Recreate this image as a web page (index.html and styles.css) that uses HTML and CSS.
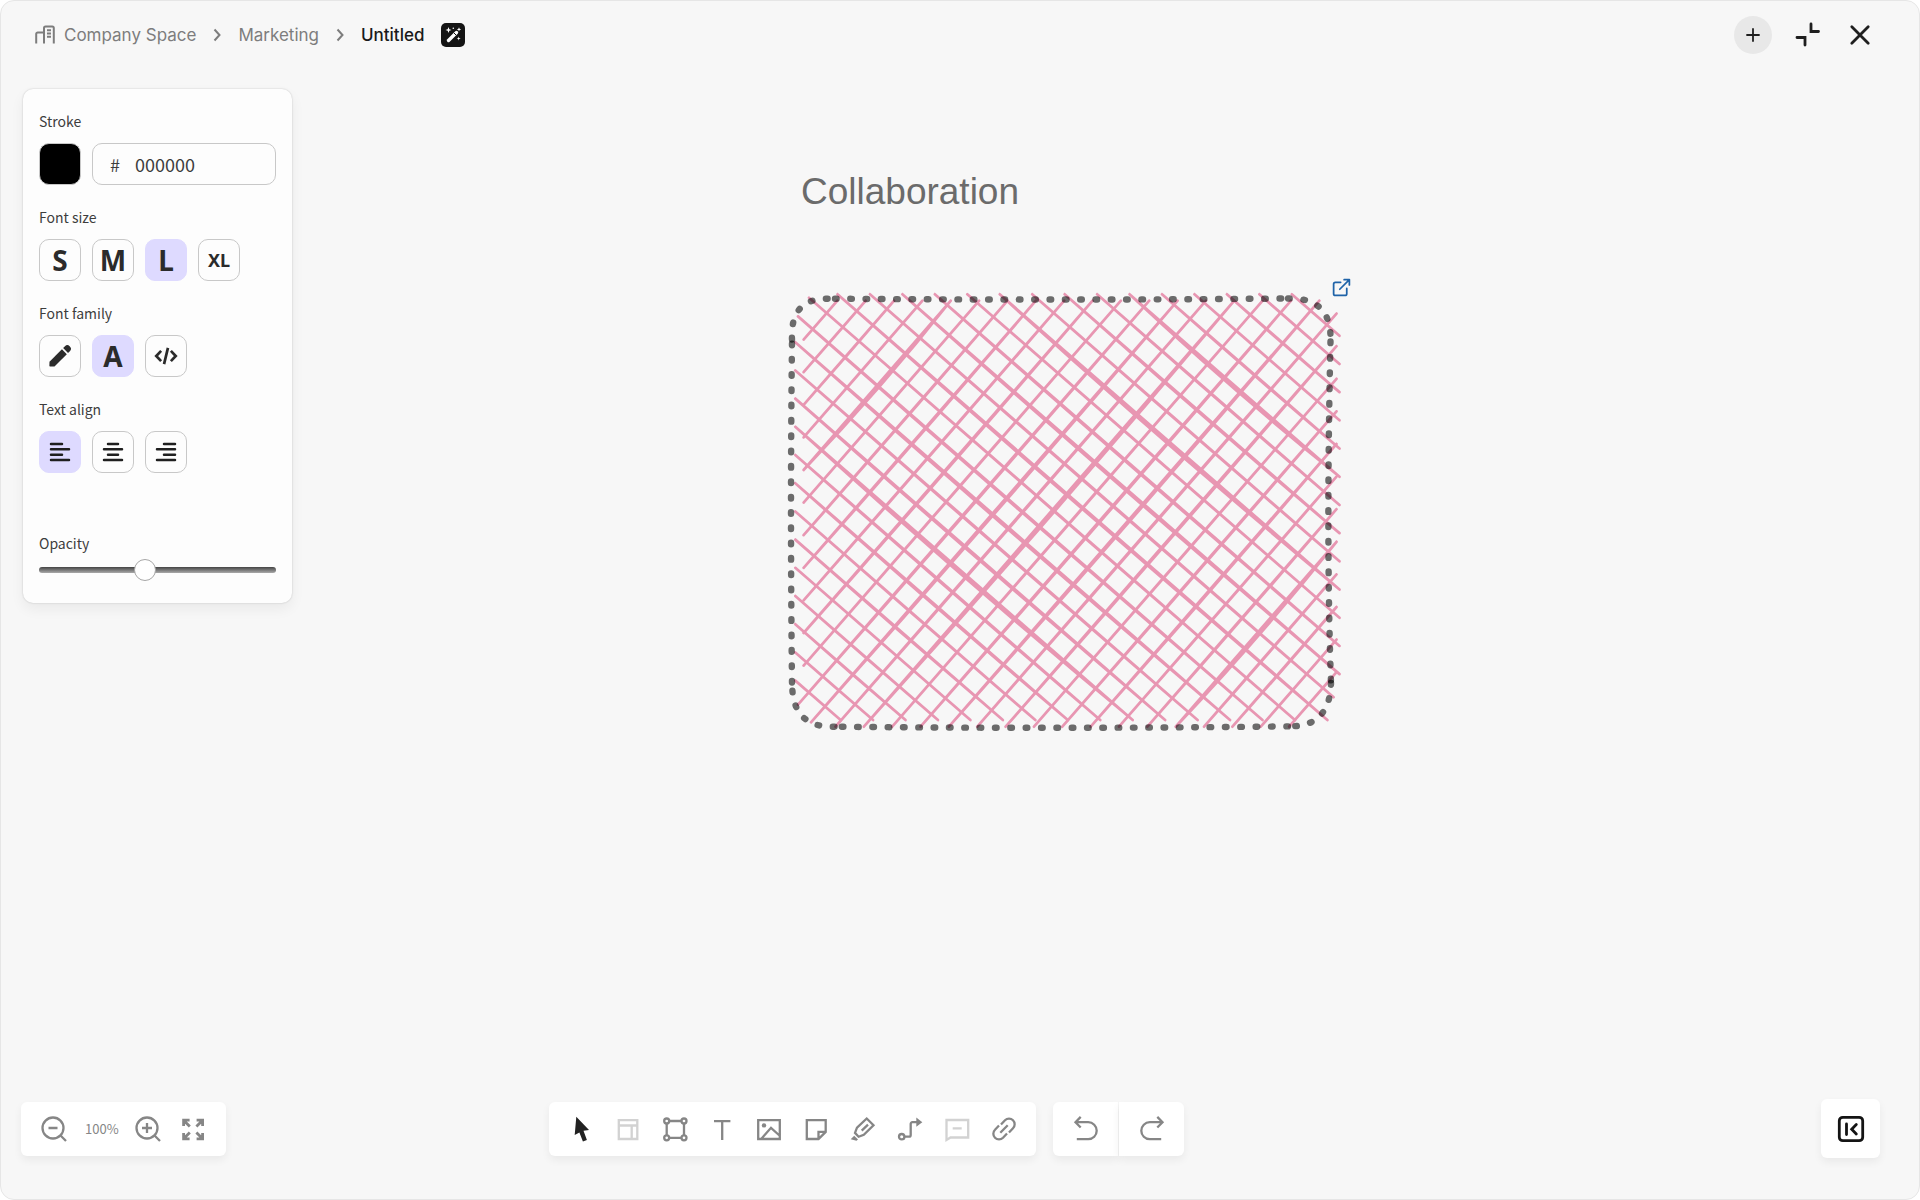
FILE: index.html
```
<!DOCTYPE html>
<html lang="en">
<head>
    <meta charset="UTF-8">
    <meta name="viewport" content="width=device-width, initial-scale=1.0">
    <title>Untitled - Marketing</title>
    <link rel="stylesheet" href="styles.css">
</head>
<body>
    <div class="app">
        <header class="topbar">
            <nav class="breadcrumb" aria-label="Breadcrumb">
                <a class="crumb" href="#space">
                    <svg class="crumb-icon" width="20" height="20" viewBox="0 0 20 20">
                        <path d="M1.2 18.5V9a1.5 1.5 0 0 1 1.5-1.5H9M9 18.5V3a1.5 1.5 0 0 1 1.5-1.5h6.8A1.5 1.5 0 0 1 18.8 3v15.5M12 5.2h4M12 8.5h4M12 11.8h4"/>
                    </svg>
                    Company Space
                </a>
                <svg class="chevron" width="8" height="14" viewBox="0 0 8 14"><path d="M1.5 1.5L6.5 7l-5 5.5"/></svg>
                <a class="crumb" href="#marketing">Marketing</a>
                <svg class="chevron" width="8" height="14" viewBox="0 0 8 14"><path d="M1.5 1.5L6.5 7l-5 5.5"/></svg>
                <span class="crumb current">Untitled</span>
                <button class="magic" aria-label="AI assist">
                    <svg width="24" height="24" viewBox="0 0 24 24">
                        <path d="M7.5 17.5L15.5 9.5" stroke="#fff" stroke-width="3.4" stroke-linecap="round"/>
                        <path d="M13 10l2 2" stroke="#141414" stroke-width="1"/>
                        <path d="M7.5 4l.8 2.2 2.2.8-2.2.8L7.5 10l-.8-2.2L4.5 7l2.2-.8zM18 4.2l.6 1.6 1.6.6-1.6.6L18 8.6 17.4 7l-1.6-.6 1.6-.6zM17.7 13.5l.5 1.5 1.5.5-1.5.5-.5 1.5-.5-1.5-1.5-.5 1.5-.5z" fill="#fff"/>
                        <circle cx="12.3" cy="5.3" r=".8" fill="#fff"/>
                    </svg>
                </button>
            </nav>
            <div class="window-actions">
                <button class="round" aria-label="Add">
                    <svg width="16" height="16" viewBox="0 0 16 16"><path d="M8 2v12M2 8h12" stroke-width="1.8"/></svg>
                </button>
                <button class="plain" aria-label="Exit full screen">
                    <svg width="26" height="26" viewBox="0 0 26 26"><path d="M2 15.5h8V23M16 2v7.5H23.5" stroke-width="2.8"/></svg>
                </button>
                <button class="plain" aria-label="Close">
                    <svg width="26" height="26" viewBox="0 0 26 26"><path d="M4.8 4.8l16.4 16.4M21.2 4.8L4.8 21.2" stroke-width="2.8"/></svg>
                </button>
            </div>
        </header>

        <main class="workspace">
            <aside class="panel">
                <div class="field">
                    <label for="stroke">Stroke</label>
                    <div class="row">
                        <button class="swatch" aria-label="Pick stroke colour"></button>
                        <div class="hex">
                            <span>#</span>
                            <input id="stroke" type="text" value="000000">
                        </div>
                    </div>
                </div>
                <div class="field" role="group" aria-labelledby="size-label">
                    <span class="label" id="size-label">Font size</span>
                    <div class="row">
                        <button class="option">S</button>
                        <button class="option">M</button>
                        <button class="option active">L</button>
                        <button class="option small">XL</button>
                    </div>
                </div>
                <div class="field" role="group" aria-labelledby="family-label">
                    <span class="label" id="family-label">Font family</span>
                    <div class="row">
                        <button class="option" aria-label="Hand-drawn">
                            <svg width="26" height="26" viewBox="0 0 24 24" fill="#2b2b2b">
                                <path d="M2.3 17.2L13.8 5.8l4.5 4.5L6.9 21.7H2.8a.6.6 0 0 1-.6-.6z"/>
                                <path d="M14.9 4.7l1.7-1.7a3 3 0 0 1 4.3 0l.2.2a3 3 0 0 1 0 4.3l-1.7 1.7z"/>
                            </svg>
                        </button>
                        <button class="option active">A</button>
                        <button class="option" aria-label="Code">
                            <svg width="26" height="26" viewBox="0 0 24 24" fill="none" stroke="#2b2b2b" stroke-width="2.5">
                                <path d="M7.5 7.3L3 12l4.5 4.7M16.5 7.3L21 12l-4.5 4.7M13.8 4.5l-3.6 15"/>
                            </svg>
                        </button>
                    </div>
                </div>
                <div class="field" role="group" aria-labelledby="align-label">
                    <span class="label" id="align-label">Text align</span>
                    <div class="row">
                        <button class="option active" aria-label="Left">
                            <svg class="align" width="22" height="22" viewBox="0 0 22 22"><path d="M2 3h11M2 8.3h18M2 13.7h11M2 19h18"/></svg>
                        </button>
                        <button class="option" aria-label="Center">
                            <svg class="align" width="22" height="22" viewBox="0 0 22 22"><path d="M6 3h10M2 8.3h18M6 13.7h10M2 19h18"/></svg>
                        </button>
                        <button class="option" aria-label="Right">
                            <svg class="align" width="22" height="22" viewBox="0 0 22 22"><path d="M9 3h11M2 8.3h18M9 13.7h11M2 19h18"/></svg>
                        </button>
                    </div>
                </div>
                <div class="field opacity">
                    <label for="opacity">Opacity</label>
                    <input id="opacity" type="range" min="0" max="100" value="44">
                </div>
            </aside>

            <p class="canvas-text">Collaboration</p>
            <svg class="sketch" width="570" height="460" viewBox="780 280 570 460">
                <g id="hatch" class="hatch"></g>
                <g class="outline">
                    <path d="M835 298.7Q1060 300.5 1288 298.5"/>
                    <path d="M1288 298.5Q1332 297 1330.5 341"/>
                    <path d="M1330.5 341.5Q1326 540 1331 683"/>
                    <path d="M1331 683Q1330 726 1291 726.3"/>
                    <path d="M1288 726.4Q1060 729 835 726.7"/>
                    <path d="M834.5 726.7Q793 728 792.2 686"/>
                    <path d="M792 682.5Q790 510 792 342"/>
                    <path d="M792 339.5Q790 298 828 298.7"/>
                </g>
            </svg>
            <a class="shape-link" href="#link" aria-label="Open link">
                <svg width="21" height="21" viewBox="0 0 24 24"><path d="M15 3h6v6M10 14L21 3M18 13v6a2 2 0 0 1-2 2H5a2 2 0 0 1-2-2V8a2 2 0 0 1 2-2h6"/></svg>
            </a>
        </main>

        <footer class="bottombar">
            <div class="card zoom">
                <button class="tool" aria-label="Zoom out">
                    <svg viewBox="0 0 28 28"><circle cx="13" cy="13" r="10.5"/><path d="M20.3 20.3l5.7 5.7M8.500 13h9"/></svg>
                </button>
                <span class="level">100%</span>
                <button class="tool" aria-label="Zoom in">
                    <svg viewBox="0 0 28 28"><circle cx="13" cy="13" r="10.5"/><path d="M20.3 20.3l5.7 5.7M8 13h10M13 8v10"/></svg>
                </button>
                <button class="tool" aria-label="Zoom to fit">
                    <svg viewBox="0 0 28 28" class="heavy"><path d="M4.600 11V5.200h6M4.800 5.400l6 6M17.600 5.200h6V11M23.400 5.400l-6 6M4.600 18v5.800h6M4.800 23.600l6-6M17.600 23.800h6V18M23.400 23.600l-6-6"/></svg>
                </button>
            </div>

            <div class="card tools">
                <button class="tool" aria-label="Select">
                    <svg viewBox="0 0 28 28"><path class="solid" d="M9.3 1.7L22 15l-5.5.8 3.4 9.2-4 1.5-3.5-9-4.7 2.5z"/></svg>
                </button>
                <button class="tool faint" aria-label="Templates">
                    <svg viewBox="0 0 28 28"><path d="M4.8 5.2h18.5V24H4.8zM4.8 10.5h18.5M17.7 10.5V24"/></svg>
                </button>
                <button class="tool" aria-label="Frame">
                    <svg viewBox="0 0 28 28"><path d="M8.3 6h12.2M8.3 22.8h12.2M5.7 8.6v11.6M23 8.6v11.6"/><circle cx="5.7" cy="6" r="2.5"/><circle cx="23" cy="6" r="2.5"/><circle cx="5.7" cy="22.8" r="2.5"/><circle cx="23" cy="22.8" r="2.5"/></svg>
                </button>
                <button class="tool" aria-label="Text">
                    <svg viewBox="0 0 28 28"><path d="M6 6.2h16.4M14.2 6.2V25"/></svg>
                </button>
                <button class="tool" aria-label="Image">
                    <svg viewBox="0 0 28 28"><path d="M3.2 5.2h21.6V24H3.2zM6 24.2l10-11.4 9 8.2"/><circle class="fill" cx="9" cy="10.4" r="2.2"/></svg>
                </button>
                <button class="tool" aria-label="Note">
                    <svg viewBox="0 0 28 28"><path d="M16.5 24H4.8V5.2h18.9v11.7zM16.5 24v-7.1h7.2"/></svg>
                </button>
                <button class="tool" aria-label="Highlighter">
                    <svg viewBox="0 0 28 28"><path d="M17.7 3.5l6.8 6.7-9.7 9.5-5.2 2-3.6-3.8 2-5.2zM12.7 15.6l6.3-6"/><path class="fill" d="M1.7 24.3l3.5-3.6 3.8 3.8-1.5 1.3z"/></svg>
                </button>
                <button class="tool" aria-label="Connector">
                    <svg viewBox="0 0 28 28"><circle cx="5.7" cy="21.7" r="2.7"/><path d="M8.4 21.7H13a1.7 1.7 0 0 0 1.7-1.7V9A1.7 1.7 0 0 1 16.4 7.2H21"/><path class="fill" d="M20.3 2.6L26.3 7.2l-6 4.5z"/></svg>
                </button>
                <button class="tool faint" aria-label="Comment">
                    <svg viewBox="0 0 28 28"><path d="M3.5 5h21.7v17.5H7.5L3.5 25zM9.7 13.4h9"/></svg>
                </button>
                <button class="tool" aria-label="Link">
                    <svg viewBox="0 0 28 28"><path d="M11 9.5l4-4.2a5.6 5.6 0 0 1 8 8l-4 4.2M17 18.5l-4 4.2a5.6 5.6 0 0 1-8-8l4-4.2M10.3 17.7l7.4-7.4"/></svg>
                </button>
            </div>

            <div class="history">
                <button class="card" aria-label="Undo">
                    <svg viewBox="0 0 28 28"><path d="M8.7 1.9L3.5 7.2l5.2 5.3M3.8 7.2h12.4a8.5 8.5 0 0 1 0 17H4.8"/></svg>
                </button>
                <button class="card" aria-label="Redo">
                    <svg viewBox="0 0 28 28"><path d="M19.3 1.9l5.2 5.3-5.2 5.3M24.2 7.2H11.8a8.5 8.5 0 0 0 0 17h11.4"/></svg>
                </button>
            </div>

            <button class="card collapse" aria-label="Collapse sidebar">
                <svg viewBox="0 0 28 28"><rect x="2.3" y="2.3" width="23.4" height="23.4" rx="3.5"/><path d="M9.5 9v10.5M19.3 9.5l-4.6 4.7 4.6 4.8"/></svg>
            </button>
        </footer>
    </div>

    <script src="sketch.js"></script>
</body>
</html>
```
FILE: styles.css
```
* {
    box-sizing: border-box;
}
body {
    margin: 0;
    background: #fff;
    font-family: "Noto Sans CJK SC", "Noto Sans", sans-serif;
    color: #3d3d3d;
}
button {
    margin: 0;
    padding: 0;
    border: none;
    background: none;
    font: inherit;
    color: inherit;
    cursor: pointer;
}
svg {
    display: block;
    flex: none;
}
.app {
    display: flex;
    flex-direction: column;
    min-height: 100vh;
    border: 1px solid #e6e6e6;
    border-radius: 14px;
    background: #f7f7f7;
}

/* top bar */
.topbar {
    display: flex;
    justify-content: space-between;
    align-items: center;
    height: 68px;
    padding: 0 43px 0 34px;
}
.breadcrumb {
    display: flex;
    align-items: center;
    gap: 17px;
    font-family: Inter, sans-serif;
    font-size: 17px;
    font-weight: 400;
}
.crumb {
    display: flex;
    align-items: center;
    gap: 9px;
    color: #7d7d7d;
    text-decoration: none;
}
.crumb.current {
    color: #1a1a1a;
    font-weight: 500;
}
.crumb-icon,
.chevron {
    fill: none;
    stroke: #7d7d7d;
    stroke-width: 2;
}
.magic {
    border-radius: 5px;
    background: #141414;
}
.window-actions {
    display: flex;
    align-items: center;
    gap: 20px;
}
.window-actions svg {
    fill: none;
    stroke: #1f1f1f;
    stroke-linecap: round;
}
.round {
    display: grid;
    place-items: center;
    width: 38px;
    height: 38px;
    border-radius: 50%;
    background: #e8e8e8;
}
.plain {
    display: grid;
    place-items: center;
    width: 32px;
    height: 32px;
}

/* properties panel */
.workspace {
    position: relative;
    flex: 1;
    padding: 20px 22px;
}
.panel {
    display: flex;
    flex-direction: column;
    gap: 22px;
    width: 269px;
    padding: 22px 16px;
    border-radius: 10px;
    background: #fdfdfd;
    box-shadow: 0 0 2px rgba(0, 0, 0, 0.2), 0 6px 14px rgba(0, 0, 0, 0.06);
}
.field {
    display: flex;
    flex-direction: column;
    gap: 12px;
}
.field label,
.field .label {
    font-size: 14px;
    line-height: 20px;
}
.row {
    display: flex;
    gap: 11px;
}
.swatch,
.option {
    width: 42px;
    height: 42px;
    border: 1px solid #c8c8c8;
    border-radius: 10px;
}
.swatch {
    background: #000;
}
.option {
    display: grid;
    place-items: center;
    font: bold 28px/38px "Noto Sans", sans-serif;
    color: #2b2b2b;
}
.option.small {
    font-size: 18px;
}
.option.active {
    border-color: #dedaff;
    background: #dedaff;
}
.align {
    fill: none;
    stroke: #1f1f1f;
    stroke-width: 2.5;
    stroke-linecap: round;
}
.hex {
    display: flex;
    flex: 1;
    align-items: center;
    gap: 15px;
    height: 42px;
    padding: 0 17px;
    border: 1px solid #c8c8c8;
    border-radius: 10px;
    font-size: 18px;
    line-height: 24px;
}
.hex input {
    width: 100%;
    min-width: 0;
    height: 24px;
    padding: 0;
    border: none;
    outline: none;
    background: none;
    font: inherit;
    color: inherit;
}
.opacity {
    gap: 6px;
    margin-top: 38px;
}
.opacity input {
    appearance: none;
    width: 100%;
    height: 22px;
    margin: 0;
    background: none;
}
.opacity input::-webkit-slider-runnable-track {
    height: 6px;
    border-radius: 3px;
    background: linear-gradient(#444, #aaa);
}
.opacity input::-webkit-slider-thumb {
    appearance: none;
    width: 22px;
    height: 22px;
    margin-top: -8px;
    border: 1px solid #a6a6a6;
    border-radius: 50%;
    background: #fff;
}

/* canvas items */
.canvas-text {
    position: absolute;
    left: 800px;
    top: 101px;
    margin: 0;
    font: 37px/44px "Liberation Sans", Arial, sans-serif;
    color: #6b6b6b;
}
.sketch {
    position: absolute;
    left: 779px;
    top: 211px;
}
.hatch {
    fill: none;
    stroke: #e896b2;
    stroke-width: 2.7;
    stroke-linecap: round;
}
.outline {
    fill: none;
    stroke: rgba(0, 0, 0, 0.57);
    stroke-width: 6.4;
    stroke-linecap: round;
    stroke-dasharray: 1.6 13.73;
}
.shape-link {
    position: absolute;
    left: 1330px;
    top: 208px;
}
.shape-link svg {
    fill: none;
    stroke: #1f63a8;
    stroke-width: 2;
    stroke-linecap: round;
    stroke-linejoin: round;
}

/* bottom bar */
.bottombar {
    display: flex;
    align-items: center;
    padding: 0 39px 41px 20px;
}
.card {
    display: flex;
    align-items: center;
    height: 54px;
    border-radius: 6px;
    background: #fff;
    box-shadow: 0 4px 8px rgba(0, 0, 0, 0.06);
}
.card svg {
    width: 28px;
    height: 28px;
    fill: none;
    stroke: #868686;
    stroke-width: 2.3;
}
.card .solid {
    fill: #222;
    stroke: none;
}
.card .fill {
    fill: #868686;
    stroke: none;
}
.card .heavy {
    stroke-width: 2.8;
}
.card.tools .faint svg {
    stroke: #d2d2d2;
}
.zoom {
    gap: 17px;
    padding: 0 19px;
}
.level {
    width: 32px;
    font-size: 13px;
    text-align: center;
    color: #868686;
}
.tools {
    gap: 19px;
    margin-left: 323px;
    padding: 0 18px;
}
.history {
    display: flex;
    gap: 1px;
    margin-left: 17px;
}
.history .card {
    justify-content: center;
    width: 65px;
}
.history .card:first-child {
    border-radius: 6px 0 0 6px;
}
.history .card:last-child {
    border-radius: 0 6px 6px 0;
}
.collapse {
    justify-content: center;
    width: 59px;
    height: 59px;
    margin-left: auto;
}
.card.collapse svg {
    stroke: #141414;
    stroke-width: 2.8;
    stroke-linecap: round;
}
```
FILE: sketch.js
```
// Cross-hatch fill of the rounded shape. Every line is drawn twice, the
// second pass bowed a little, so that it looks hand-made.
const hatch = document.getElementById('hatch');

function addLine(x1, y1, x2, y2, bow) {
    const length = Math.hypot(x2 - x1, y2 - y1);
    const cx = (x1 + x2) / 2 - (y2 - y1) / length * bow * 2;
    const cy = (y1 + y2) / 2 + (x2 - x1) / length * bow * 2;
    const path = document.createElementNS('http://www.w3.org/2000/svg', 'path');
    path.setAttribute('d', `M${x1} ${y1}L${x2} ${y2}M${x1} ${y1}Q${cx} ${cy} ${x2} ${y2}`);
    hatch.appendChild(path);
}

function bowFor(index, strong, length) {
    if (strong.includes(index)) return 2.6;
    return (0.4 + (index * 7 % 5) / 3) * Math.min(1, length / 400);
}

// falling lines
const fall = 0.869;
for (let k = 0; k < 30; k++) {
    const top = 1291.8 - 32.45 * k;
    const left = k === 15 ? 809 : k === 16 ? 798 : 795.3;
    const x1 = Math.max(top, left);
    const right = k === 13 ? 1333.6 : 1339.5;
    const x2 = Math.min(right, top + 425.7 / fall);
    addLine(x1, 294.3 + (x1 - top) * fall, x2, 294.3 + (x2 - top) * fall,
        bowFor(k, [5, 9, 20], x2 - x1));
}

// rising lines
const rise = 1.15;
for (let j = 0; j < 30; j++) {
    const top = 837.4 + 28.35 * j;
    const left = j === 11 ? 798 : j === 12 ? 811 : 803.6;
    const x1 = Math.max(left, top - 426 / rise);
    const x2 = Math.min(top, 1336.5);
    // the last lines start lower, where the corner curves away
    const start = top > 1336.5 ? x2 : top;
    addLine(x1, 300.7 + (top - x1) * rise, start, 300.7 + (top - start) * rise,
        bowFor(j, [4, 14, 25], x2 - x1));
}
```
